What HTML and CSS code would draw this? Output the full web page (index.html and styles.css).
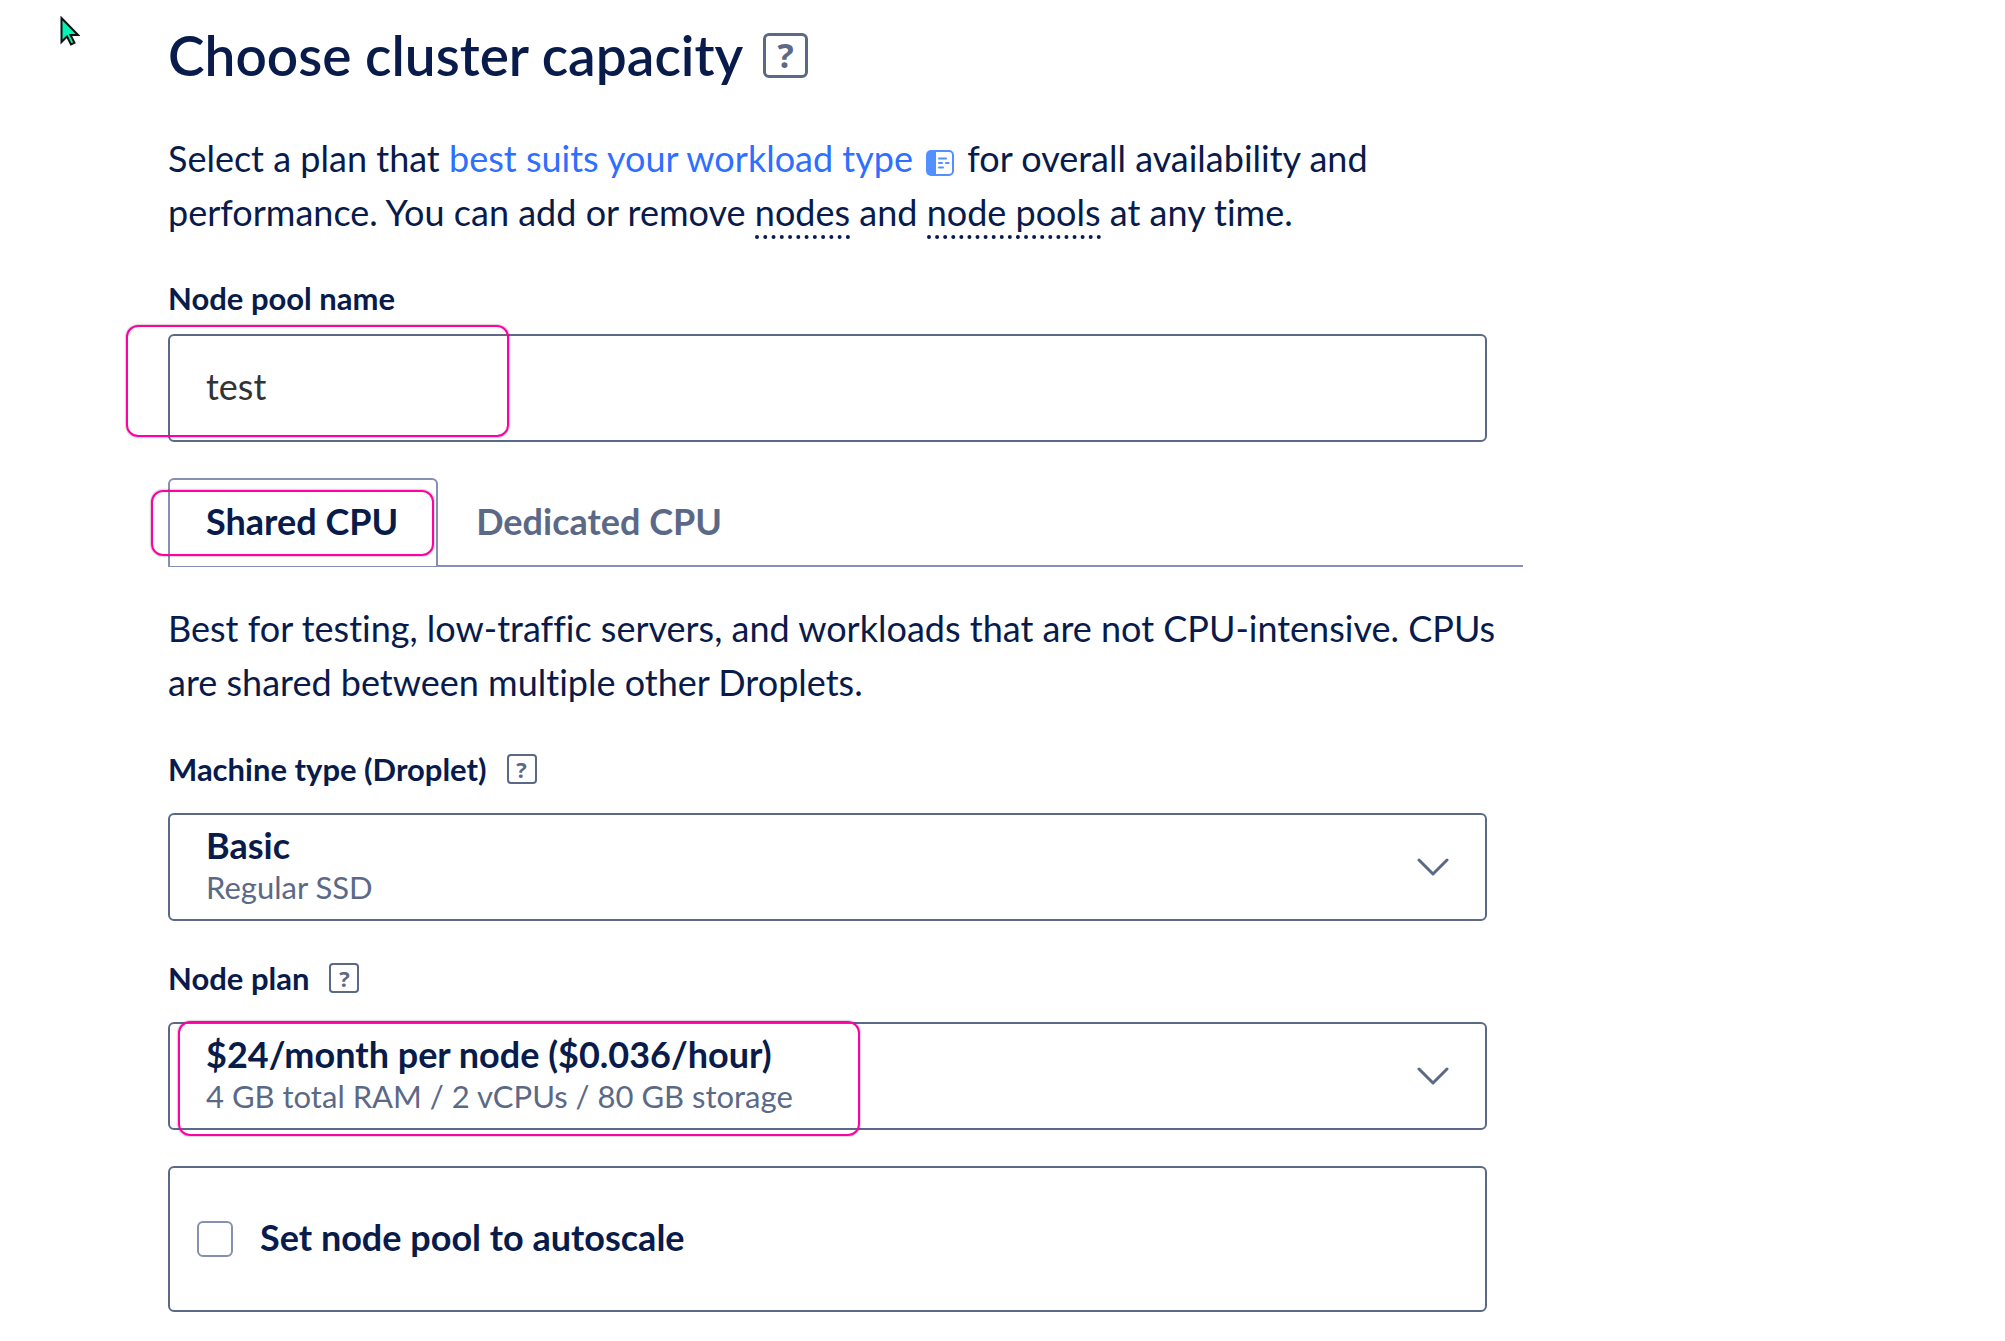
FILE: index.html
```html
<!DOCTYPE html>
<html lang="en">
<head>
<meta charset="utf-8">
<meta name="viewport" content="width=device-width, initial-scale=1">
<title>Choose cluster capacity</title>
<link rel="stylesheet" href="styles.css">
</head>
<body>
<svg class="cursor" viewBox="0 0 20 30" aria-hidden="true"><path d="M1.500 2v24l5.500-5.500 4 8 3.500-1.800-4-7.700h7.500z"/></svg>
<main class="page">
  <header class="heading">
    <h1>Choose cluster capacity</h1>
    <button class="help help-large" type="button" aria-label="Help with cluster capacity">?</button>
  </header>

  <p class="copy">Select a plan that <a class="link" href="#plans">best suits your workload type<svg class="doc-icon" viewBox="0 0 28 26" aria-hidden="true"><rect x="1" y="1" width="26" height="24" rx="4" fill="none" stroke="currentColor" stroke-width="2"/><path d="M4 1h6v24H4a3 3 0 0 1-3-3V4a3 3 0 0 1 3-3z" fill="currentColor"/><path d="M13 8.500h7M13 13h3M20 13h2.500M13 17.500h4" fill="none" stroke="currentColor" stroke-width="2" stroke-linecap="round"/></svg></a> for overall availability and performance. You can add or remove <span class="term">nodes</span> and <span class="term">node pools</span> at any time.</p>

  <section class="field">
    <label class="label" for="pool-name">Node pool name</label>
    <div class="control">
      <input class="box text-input" id="pool-name" type="text" value="test">
      <span class="mark mark-name"></span>
    </div>
  </section>

  <div class="tabs" role="tablist">
    <button class="tab tab-active" type="button" role="tab" aria-selected="true">Shared CPU</button>
    <button class="tab" type="button" role="tab" aria-selected="false">Dedicated CPU</button>
    <span class="mark mark-tab"></span>
  </div>

  <p class="copy">Best for testing, low-traffic servers, and workloads that are not CPU-intensive. CPUs are shared between multiple other Droplets.</p>

  <section class="field">
    <div class="label-row">
      <label class="label" for="machine">Machine type (Droplet)</label>
      <button class="help" type="button" aria-label="Help with machine type">?</button>
    </div>
    <div class="control">
      <select class="box select" id="machine" aria-describedby="machine-detail"><option>Basic</option></select>
      <span class="detail" id="machine-detail">Regular SSD</span>
      <svg class="chevron" viewBox="0 0 32 18" aria-hidden="true"><path d="M2 2l14 14L30 2"/></svg>
    </div>
  </section>

  <section class="field">
    <div class="label-row">
      <label class="label" for="plan">Node plan</label>
      <button class="help" type="button" aria-label="Help with node plan">?</button>
    </div>
    <div class="control">
      <select class="box select" id="plan" aria-describedby="plan-detail"><option>$24/month per node ($0.036/hour)</option></select>
      <span class="detail" id="plan-detail">4 GB total RAM / 2 vCPUs / 80 GB storage</span>
      <svg class="chevron" viewBox="0 0 32 18" aria-hidden="true"><path d="M2 2l14 14L30 2"/></svg>
      <span class="mark mark-plan"></span>
    </div>
  </section>

  <div class="field autoscale">
    <input class="checkbox" id="autoscale" type="checkbox">
    <label class="autoscale-label" for="autoscale">Set node pool to autoscale</label>
  </div>
</main>
</body>
</html>
```
FILE: styles.css
```css
* { box-sizing: border-box; }

body {
  margin: 0;
  background: #fff;
  color: #081b4b;
  font: 400 36px/54px Lato, "Open Sans", sans-serif;
  font-variant-ligatures: none;
}

h1, p { margin: 0; }
button, input, select { font: inherit; font-variant-ligatures: none; color: inherit; margin: 0; }

.page {
  max-width: 1523px;
  padding: 21px 0 28px 168px;
}

.heading {
  display: flex;
  align-items: center;
  gap: 20px;
  margin-bottom: 42px;
}
.heading h1 { font-size: 55px; line-height: 68px; font-weight: 600; }

.copy { margin-bottom: 39px; }
.link { color: #2f6fff; text-decoration: none; }
.doc-icon {
  width: 28px;
  height: 26px;
  margin: 0 4px 0 13px;
  vertical-align: -4px;
  color: #5290ff;
}
.term { padding-bottom: 1px; border-bottom: 4px dotted #081b4b; }

.field { margin: 0 36px 36px 0; }
.label { display: block; font-size: 31px; line-height: 40px; font-weight: 700; margin-bottom: 16px; }
.label-row { display: flex; align-items: center; gap: 20px; min-height: 42px; margin-bottom: 23px; }
.label-row .label { margin: 0; }

.help {
  display: flex;
  align-items: center;
  justify-content: center;
  width: 30px;
  height: 30px;
  padding: 0;
  border: 2px solid #5b6987;
  border-radius: 4px;
  background: none;
  color: #5b6987;
  font: 700 22px/24px "Open Sans", sans-serif;
}
.help-large { width: 45px; height: 45px; border-width: 3px; border-radius: 6px; font-size: 34px; }

.control { position: relative; display: grid; align-items: center; }
.control > .box, .detail, .chevron { grid-area: 1 / 1; }

.box {
  width: 100%;
  height: 108px;
  border: 2px solid #5b6987;
  border-radius: 6px;
  background: none;
}
.text-input { padding: 0 36px 4px; color: #333; }
.select {
  appearance: none;
  padding: 8px 80px 52px 36px;
  font-weight: 700;
  line-height: 44px;
}
.detail {
  align-self: end;
  margin: 0 80px 14px 38px;
  color: #5b6987;
  font-size: 31px;
  line-height: 40px;
  pointer-events: none;
}
.chevron {
  justify-self: end;
  width: 32px;
  height: 18px;
  margin-right: 38px;
  fill: none;
  stroke: #5b6987;
  stroke-width: 3;
  stroke-linecap: round;
  stroke-linejoin: round;
  pointer-events: none;
}

.tabs {
  position: relative;
  display: flex;
  margin-bottom: 34px;
  border-bottom: 2px solid #8590b0;
}
.tab {
  padding: 14px 38px 17px;
  border: 0 solid #8590b0;
  border-top: 2px solid transparent;
  background: #fff;
  color: #5b6987;
  font-weight: 700;
}
.tab-active {
  margin-bottom: -2px;
  padding: 14px 38px 18px 36px;
  border-width: 2px 2px 1px;
  border-color: #8590b0;
  border-radius: 6px 6px 0 0;
  color: #081b4b;
}

.autoscale {
  display: flex;
  align-items: center;
  gap: 27px;
  min-height: 146px;
  margin-bottom: 0;
  padding: 0 27px;
  border: 2px solid #5b6987;
  border-radius: 6px;
}
.checkbox {
  appearance: none;
  width: 36px;
  height: 36px;
  border: 2px solid #8590b0;
  border-radius: 6px;
  background: #fff;
}
.autoscale-label { padding-bottom: 4px; font-weight: 700; }

/* Highlight outlines and pointer drawn over the form */
.mark {
  position: absolute;
  border: 2px solid #ff00a2;
  border-radius: 12px;
  box-shadow: 0 0 2px rgba(60, 0, 40, .6);
  pointer-events: none;
}
.mark-name { left: -42px; top: -9px; width: 383px; height: 112px; }
.mark-tab { left: -17px; top: 12px; width: 283px; height: 66px; }
.mark-plan { left: 10px; top: -1px; width: 682px; height: 115px; }

.cursor {
  position: absolute;
  left: 60px;
  top: 16px;
  width: 20px;
  height: 30px;
  fill: #00f5b4;
  stroke: #111;
  stroke-width: 2;
}
```
